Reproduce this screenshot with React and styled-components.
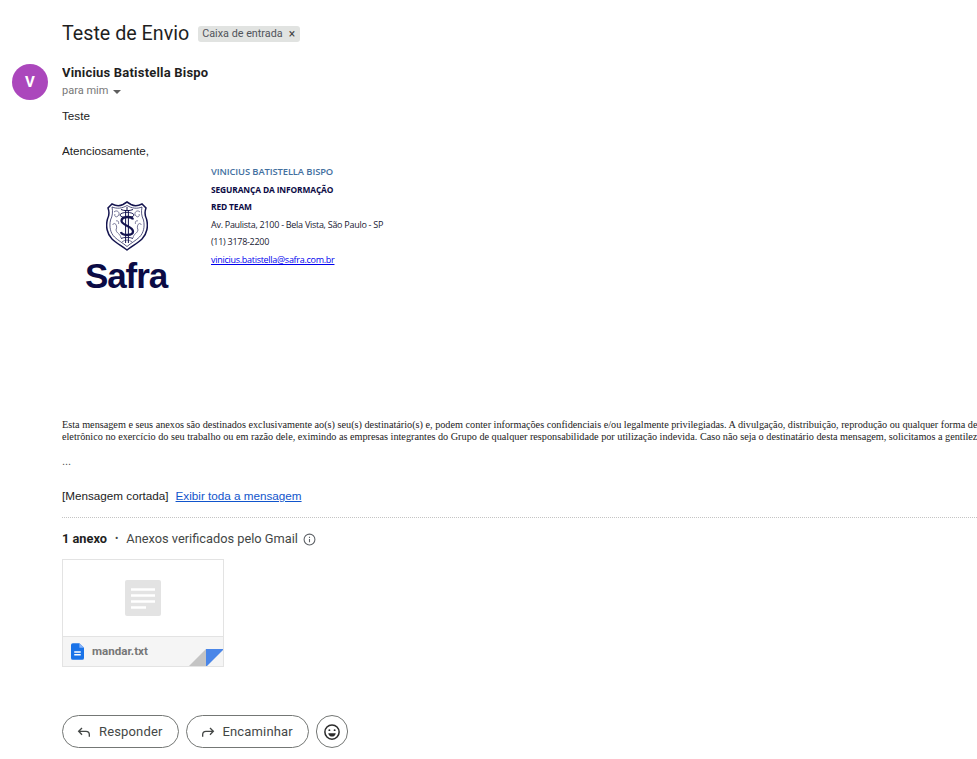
import React from "react";
import styled, { createGlobalStyle } from "styled-components";

const Global = createGlobalStyle`
  html, body { margin: 0; padding: 0; background: #fff; overflow: hidden; }
  body { font-family: "Liberation Sans", Arial, sans-serif; }
`;

const Page = styled.div`
  width: 977px;
  height: 759px;
  overflow: hidden;
  background: #fff;
`;
const SubjectRow = styled.div`
  display: flex;
  align-items: center;
  gap: 9px;
  padding: 21px 0 0 62px;
  height: 26px;
`;
const Subject = styled.h2`
  margin: 0;
  font: 400 19.7px/26px Roboto, sans-serif;
  color: #1f1f1f;
`;
const Chip = styled.span`
  display: inline-flex;
  align-items: center;
  gap: 6px;
  height: 16px;
  padding: 0 5px 0 4px;
  border-radius: 3px;
  background: #e1e3e1;
  color: #50535a;
  font: 400 10.8px/16px Roboto, sans-serif;
`;
const ChipClose = styled.span`
  font-size: 12px;
  line-height: 16px;
  color: #444;
`;
const Message = styled.div`
  display: flex;
  gap: 14px;
  padding: 17px 0 0 12px;
`;
const Avatar = styled.div`
  flex: none;
  width: 36px;
  height: 36px;
  border-radius: 50%;
  background: #ab47bc;
  color: #fff;
  font: 700 15px/36px Roboto, sans-serif;
  text-align: center;
`;
const Content = styled.div`
  flex: none;
  width: 915px;
  overflow: hidden;
`;
const Sender = styled.div`
  font: 700 13px/18px Roboto, sans-serif;
  color: #1f1f1f;
  letter-spacing: 0.2px;
`;
const ToLine = styled.div`
  display: flex;
  align-items: center;
  gap: 5px;
  margin-top: 1px;
  font: 400 11px/16px Roboto, sans-serif;
  color: #777;
`;
const Caret = styled.span`
  width: 0;
  height: 0;
  margin-top: 2px;
  border-left: 4px solid transparent;
  border-right: 4px solid transparent;
  border-top: 4px solid #5e5e5e;
`;
const Body = styled.div`
  margin-top: 8px;
  font: 400 11.7px/18px "Liberation Sans", Arial, sans-serif;
  color: #222;
`;
const Para = styled.p`
  margin: 0 0 ${(p) => p.$after || 0}px;
`;
const Signature = styled.div`
  display: flex;
  height: 259px;
`;
const LogoCol = styled.div`
  flex: none;
  width: 149px;
  padding: 41px 0 0 23px;
  box-sizing: border-box;
  display: flex;
  flex-direction: column;
`;
const LogoWord = styled.span`
  margin-top: 7px;
  font: 700 35px/36px "Liberation Sans", Arial, sans-serif;
  letter-spacing: -1.1px;
  color: #0b0b45;
`;
const Crest = styled.svg`
  display: block;
  margin-left: 21px;
`;
const SigLines = styled.div`
  display: flex;
  flex-direction: column;
  padding-top: 3px;
  font: 400 9px/17.6px "Open Sans", sans-serif;
  letter-spacing: -0.28px;
  color: #1a1a33;
`;
const SigName = styled.span`
  font-weight: 600;
  font-size: 9.4px;
  letter-spacing: -0.1px;
  color: #44709f;
`;
const SigBold = styled.span`
  font-weight: 700;
  font-size: 8.4px;
  letter-spacing: -0.12px;
  color: #0b0b45;
`;
const SigLink = styled.a`
  color: #0000ee;
  text-decoration: underline;
`;
const Disclaimer = styled.div`
  font: 400 10.22px/12px "Liberation Serif", serif;
  color: #222;
  white-space: nowrap;
`;
const Dots = styled.div`
  margin-top: 11px;
  font: 400 11px/14px "Liberation Sans", sans-serif;
  color: #555;
`;
const Clipped = styled.div`
  margin-top: 20px;
  display: flex;
  gap: 7px;
  font: 400 11.7px/16px "Liberation Sans", Arial, sans-serif;
  color: #222;
`;
const Link = styled.a`
  color: #1155cc;
  text-decoration: underline;
`;
const Attachments = styled.div`
  margin-top: 13px;
  border-top: 1px dotted #c4c4c4;
`;
const AttachHead = styled.div`
  display: flex;
  align-items: center;
  margin-top: 12px;
  font: 400 12.8px/18px Roboto, sans-serif;
  color: #444746;
`;
const AttachCount = styled.b`
  font-weight: 700;
  color: #1f1f1f;
`;
const Dot = styled.span`
  margin: 0 8px;
  font-size: 10px;
`;
const InfoIcon = styled.svg`
  margin-left: 5px;
`;
const Card = styled.div`
  position: relative;
  width: 162px;
  height: 108px;
  margin-top: 11px;
  box-sizing: border-box;
  border: 1px solid #e3e3e3;
  display: flex;
  flex-direction: column;
  overflow: hidden;
`;
const Preview = styled.div`
  flex: 1;
  display: flex;
  align-items: center;
  justify-content: center;
`;
const CardFooter = styled.div`
  flex: none;
  height: 29px;
  border-top: 1px solid #e3e3e3;
  background: #f5f5f5;
  display: flex;
  align-items: center;
  gap: 8px;
  padding-left: 8px;
`;
const FileName = styled.span`
  margin-top: -2px;
  font: 700 11.6px/16px Roboto, sans-serif;
  color: #777;
`;
const Fold = styled.svg`
  position: absolute;
  right: -1px;
  bottom: -1px;
`;
const Actions = styled.div`
  display: flex;
  gap: 7px;
  margin-top: 48px;
`;
const ActionButton = styled.button`
  display: flex;
  align-items: center;
  gap: 7px;
  height: 33px;
  box-sizing: border-box;
  padding: 0 15px 0 13px;
  background: #fff;
  border: 1px solid #747775;
  border-radius: 17px;
  font: 400 13px/18px Roboto, sans-serif;
  letter-spacing: 0.15px;
  color: #444746;
`;
const EmojiButton = styled(ActionButton)`
  width: 32px;
  padding: 0;
  justify-content: center;
`;

const CrestArt = () => (
  <Crest width="42" height="50" viewBox="0 0 42 50" fill="none" stroke="#14144f">
    <path
      d="M21 1 L25 3.5 C29 5.500 32 5 36 3 L40 7 C38.500 11 38.500 14 40.500 18 C42.500 25 41 33 36 38 C32 42 26 45 21 49 C16 45 10 42 6 38 C1 33 -0.500 25 1.500 18 C3.500 14 3.500 11 2 7 L6 3 C10 5 13 5.500 17 3.500 Z"
      strokeWidth="1.5"
      fill="#fff"
    />
    <path
      d="M21 4.500 C26 7.500 31 8 36 6 C35 11 35.500 15 37.500 19 C39 26 37.500 32 33.500 36 C30 39.500 25 42 21 45.500 C17 42 12 39.500 8.500 36 C4.500 32 3 26 4.500 19 C6.500 15 7 11 6 6 C11 8 16 7.500 21 4.500 Z"
      strokeWidth="0.7"
    />
    <path
      d="M8 11 C11 8 15 12 12 15 C10 17 8 15 9 13 M34 11 C31 8 27 12 30 15 C32 17 34 15 33 13 M6.500 24 C9 20 12 25 10 29 C11 33 14 32 15 37 M35.500 24 C33 20 30 25 32 29 C31 33 28 32 27 37 M16 41 C19 38.500 23 38.500 26 41 M10 20 C12 19 13 21 12.500 23 M32 20 C30 19 29 21 29.500 23"
      strokeWidth="0.8"
      stroke="#55557f"
    />
    <path d="M15 8.500 C18 10 24 10 27 8.500 M21 6 V10" strokeWidth="1" />
    <ellipse cx="21" cy="14" rx="7" ry="2.600" strokeWidth="0.9" />
    <path
      d="M27 18.500 C26 15 16 15 15.500 19.500 C15 24.500 27 25 27 30.500 C27 35 16 35 15 31"
      strokeWidth="2.300"
    />
    <path d="M19.600 10 V42 M22.400 10 V42" strokeWidth="1" />
    <path d="M15 37.500 C18 36 24 36 27 37.500" strokeWidth="0.9" />
  </Crest>
);

export default function App() {
  return (
    <Page>
      <Global />
      <SubjectRow>
        <Subject>Teste de Envio</Subject>
        <Chip>
          Caixa de entrada <ChipClose>×</ChipClose>
        </Chip>
      </SubjectRow>
      <Message>
        <Avatar>V</Avatar>
        <Content>
          <Sender>Vinicius Batistella Bispo</Sender>
          <ToLine>
            para mim <Caret />
          </ToLine>
          <Body>
            <Para $after={17}>Teste</Para>
            <Para>Atenciosamente,</Para>
            <Signature>
              <LogoCol>
                <CrestArt />
                <LogoWord>Safra</LogoWord>
              </LogoCol>
              <SigLines>
                <SigName>VINICIUS BATISTELLA BISPO</SigName>
                <SigBold>SEGURANÇA DA INFORMAÇÃO</SigBold>
                <SigBold>RED TEAM</SigBold>
                <span>Av. Paulista, 2100 - Bela Vista, São Paulo - SP</span>
                <span>(11) 3178-2200</span>
                <SigLink href="#">vinicius.batistella@safra.com.br</SigLink>
              </SigLines>
            </Signature>
            <Disclaimer>
              Esta mensagem e seus anexos são destinados exclusivamente ao(s) seu(s) destinatário(s) e, podem conter informações confidenciais e/ou legalmente privilegiadas. A divulgação, distribuição, reprodução ou qualquer forma de
              <br />
              eletrônico no exercício do seu trabalho ou em razão dele, eximindo as empresas integrantes do Grupo de qualquer responsabilidade por utilização indevida. Caso não seja o destinatário desta mensagem, solicitamos a gentileza
            </Disclaimer>
            <Dots>...</Dots>
            <Clipped>
              <span>[Mensagem cortada]</span>
              <Link href="#">Exibir toda a mensagem</Link>
            </Clipped>
          </Body>
          <Attachments>
            <AttachHead>
              <AttachCount>1 anexo</AttachCount>
              <Dot>•</Dot>
              Anexos verificados pelo Gmail
              <InfoIcon width="13" height="13" viewBox="0 0 24 24" fill="none" stroke="#5f6368" strokeWidth="2">
                <circle cx="12" cy="12" r="10" />
                <path d="M12 11v6M12 7v2" />
              </InfoIcon>
            </AttachHead>
            <Card>
              <Preview>
                <svg width="36" height="36" viewBox="0 0 36 36">
                  <rect width="36" height="36" rx="2" fill="#e3e3e3" />
                  <path d="M6 9.500h24M6 15.500h24M6 21.500h24M6 27.500h15" stroke="#fff" strokeWidth="2.600" />
                </svg>
              </Preview>
              <CardFooter>
                <svg width="13" height="17" viewBox="0 0 14 18">
                  <path d="M2 0h7l5 5v11a2 2 0 0 1-2 2H2a2 2 0 0 1-2-2V2a2 2 0 0 1 2-2z" fill="#1a73e8" />
                  <path d="M9 0v5h5z" fill="#8ab4f8" />
                  <path d="M3.500 9.500h7M3.500 12.500h7" stroke="#fff" strokeWidth="1.500" />
                </svg>
                <FileName>mandar.txt</FileName>
              </CardFooter>
              <Fold width="36" height="18" viewBox="0 0 36 18">
                <path d="M0 18 L18 0 V18 Z" fill="#c4c4c4" />
                <path d="M18 0 H36 L18 18 Z" fill="#4a86e8" />
              </Fold>
            </Card>
          </Attachments>
          <Actions>
            <ActionButton>
              <svg width="16" height="16" viewBox="0 0 24 24" fill="none" stroke="#444746" strokeWidth="2">
                <path d="M9 6 L4 11 L9 16 M4 11 H15 C18 11 20 13 20 16 V19" />
              </svg>
              Responder
            </ActionButton>
            <ActionButton>
              <svg width="16" height="16" viewBox="0 0 24 24" fill="none" stroke="#444746" strokeWidth="2">
                <path d="M15 6 L20 11 L15 16 M20 11 H9 C6 11 4 13 4 16 V19" />
              </svg>
              Encaminhar
            </ActionButton>
            <EmojiButton aria-label="Reagir">
              <svg width="18" height="18" viewBox="0 0 24 24" fill="none" stroke="#2b2b2b" strokeWidth="2">
                <circle cx="12" cy="12" r="9.500" />
                <circle cx="8.500" cy="9.500" r="1.300" fill="#2b2b2b" stroke="none" />
                <circle cx="15.500" cy="9.500" r="1.300" fill="#2b2b2b" stroke="none" />
                <path d="M7 13.500h10c-.5 3-2.500 4.500-5 4.500s-4.500-1.500-5-4.500z" fill="#2b2b2b" stroke="none" />
              </svg>
            </EmojiButton>
          </Actions>
        </Content>
      </Message>
    </Page>
  );
}
